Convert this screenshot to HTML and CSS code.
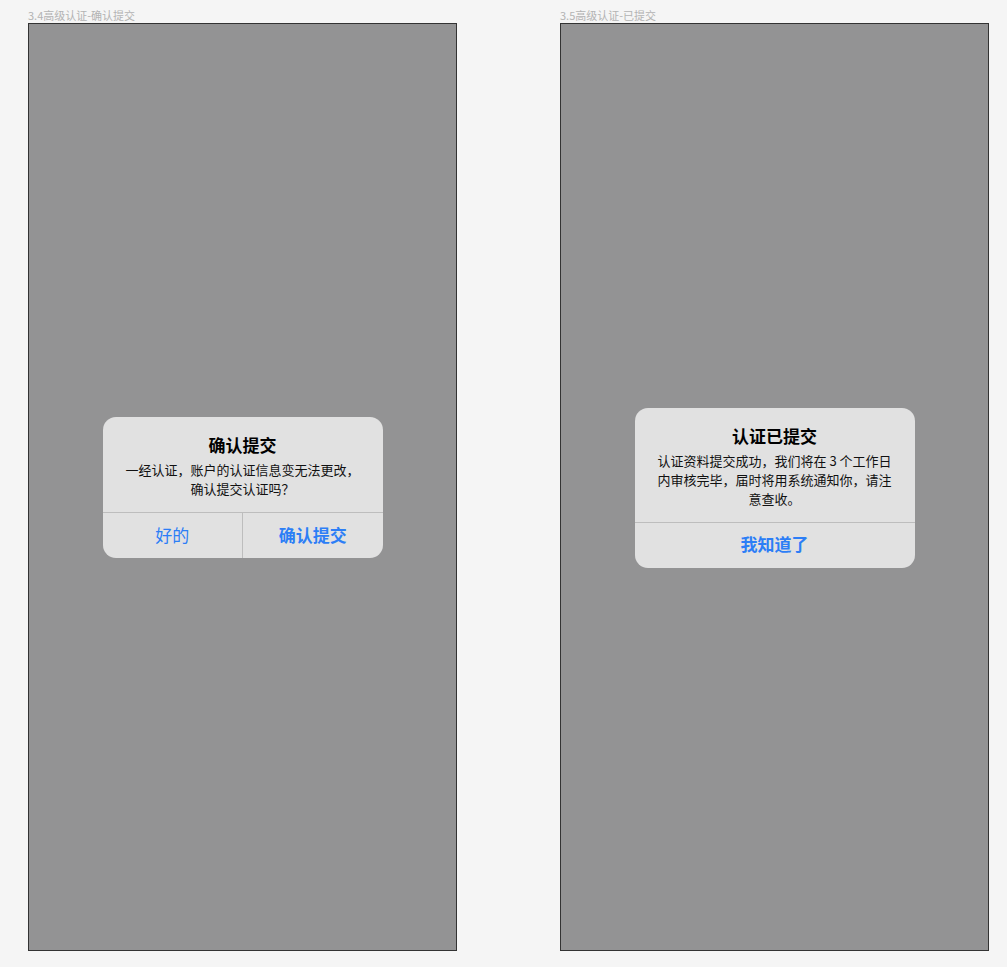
FILE: index.html
```html
<!DOCTYPE html>
<html lang="zh-CN">
<head>
<meta charset="utf-8">
<title>高级认证</title>
<link rel="stylesheet" href="styles.css">
</head>
<body>
<div class="canvas">
  <section class="board-col">
    <div class="board-label">3.4高级认证-确认提交</div>
    <div class="board">
      <div class="alert">
        <div class="alert-body">
          <div class="alert-title">确认提交</div>
          <div class="alert-msg">一经认证，账户的认证信息变无法更改，确认提交认证吗？</div>
        </div>
        <div class="alert-actions">
          <div class="alert-btn">好的</div>
          <div class="alert-btn strong">确认提交</div>
        </div>
      </div>
    </div>
  </section>
  <section class="board-col">
    <div class="board-label">3.5高级认证-已提交</div>
    <div class="board">
      <div class="alert">
        <div class="alert-body">
          <div class="alert-title">认证已提交</div>
          <div class="alert-msg">认证资料提交成功，我们将在 3 个工作日内审核完毕，届时将用系统通知你，请注意查收。</div>
        </div>
        <div class="alert-actions">
          <div class="alert-btn strong">我知道了</div>
        </div>
      </div>
    </div>
  </section>
</div>
</body>
</html>
```
FILE: styles.css
```css
html, body {
  margin: 0;
  padding: 0;
  background: #f5f5f5;
  font-family: "Noto Sans CJK SC", "Noto Sans", sans-serif;
}
.canvas {
  display: flex;
  gap: 103px;
  padding: 7px 0 0 28px;
}
.board-col {
  display: flex;
  flex-direction: column;
}
.board-label {
  font-size: 11px;
  line-height: 16px;
  color: #b3b3b3;
  height: 16px;
}
.board {
  width: 427px;
  height: 926px;
  border: 1px solid #333;
  background: #939394;
  display: flex;
  align-items: center;
  justify-content: center;
}
.alert {
  width: 280px;
  background: #e1e1e1;
  border-radius: 13px;
  overflow: hidden;
  margin-top: 1px;
}
.alert-body {
  padding: 16px 18px 14px;
  text-align: center;
}
.alert-title {
  font-size: 17px;
  line-height: 24px;
  font-weight: 700;
  color: #000;
}
.alert-msg {
  margin-top: 3px;
  font-size: 13px;
  line-height: 19px;
  color: #111;
}
.alert-actions {
  display: flex;
  border-top: 1px solid #bdbdbd;
  height: 45px;
}
.alert-btn {
  flex: 1;
  display: flex;
  align-items: center;
  justify-content: center;
  font-size: 17px;
  color: #2c7ef6;
  padding-bottom: 3px;
}
.alert-btn + .alert-btn {
  border-left: 1px solid #bdbdbd;
}
.alert-btn.strong {
  font-weight: 700;
}
```
